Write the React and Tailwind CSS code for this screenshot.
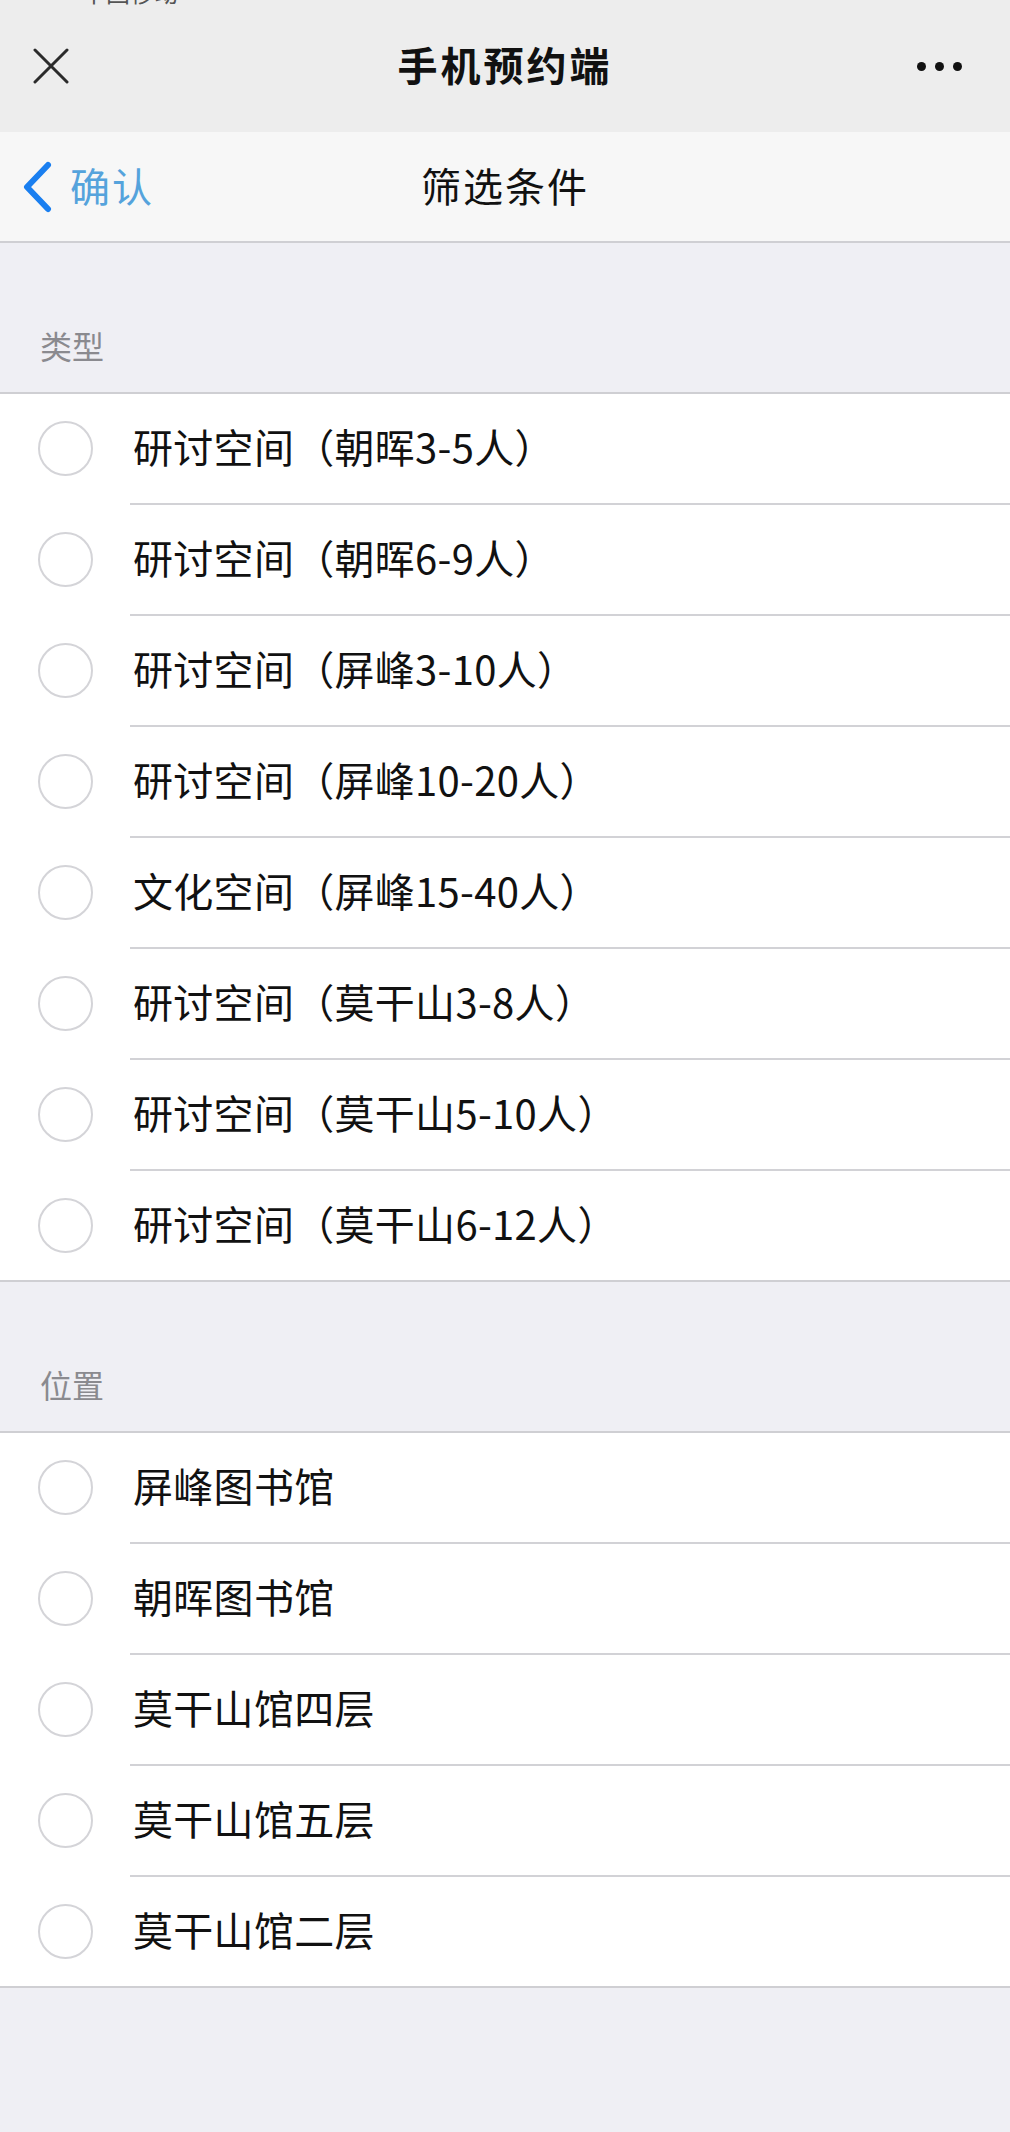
import React from "react";

const types = [
  "研讨空间（朝晖3-5人）",
  "研讨空间（朝晖6-9人）",
  "研讨空间（屏峰3-10人）",
  "研讨空间（屏峰10-20人）",
  "文化空间（屏峰15-40人）",
  "研讨空间（莫干山3-8人）",
  "研讨空间（莫干山5-10人）",
  "研讨空间（莫干山6-12人）",
];

const places = ["屏峰图书馆", "朝晖图书馆", "莫干山馆四层", "莫干山馆五层", "莫干山馆二层"];

const OptionRow = ({ label }) => (
  <div className="flex items-center h-[109px]">
    <div className="ml-[38px] w-[55px] h-[55px] rounded-full border-2 border-[#d4d4d8] shrink-0" />
    <span className="ml-[40px] mb-[6px] text-[40px] leading-none tracking-[0.3px] text-[#111]">{label}</span>
  </div>
);

const Section = ({ title, items }) => (
  <div>
    <div className="h-[149px] flex items-end pl-[40px] pb-[31px] text-[32px] leading-none text-[#8a8a8f]">
      {title}
    </div>
    <div className="bg-white border-y-2 border-[#cfcfd3]">
      {items.map((item, i) => (
        <div key={item}>
          {i > 0 && <div className="ml-[130px] h-[2px] bg-[#d2d2d6]" />}
          <OptionRow label={item} />
        </div>
      ))}
    </div>
  </div>
);

export default function App() {
  return (
    <div
      className="min-h-screen bg-[#efeff4]"
      style={{ fontFamily: '"Noto Sans CJK SC", "Noto Sans", sans-serif' }}
    >
      {/* top bar */}
      <div className="relative h-[132px] bg-[#ededed] grid grid-cols-[1fr_auto_1fr] items-center">
        <div className="absolute top-0 left-[82px] h-[5px] overflow-hidden">
          <span className="block -mt-[20px] text-[24px] leading-none text-[#555]">
            中国移动 <span className="inline-block w-[23px] h-[18px] bg-[#555] align-top" />
          </span>
        </div>
        <div className="pl-[33px]">
          <svg width="36" height="36" viewBox="0 0 36 36" fill="none">
            <path d="M2 2L34 34M34 2L2 34" stroke="#2b2b2b" strokeWidth="3" strokeLinecap="round" />
          </svg>
        </div>
        <div className="mb-[4px] text-[40px] font-semibold leading-none text-[#111] tracking-[3px]">手机预约端</div>
        <div className="flex justify-end pr-[48px] gap-[9px]">
          <span className="w-[9px] h-[9px] rounded-full bg-[#111]" />
          <span className="w-[9px] h-[9px] rounded-full bg-[#111]" />
          <span className="w-[9px] h-[9px] rounded-full bg-[#111]" />
        </div>
      </div>

      {/* filter nav */}
      <div className="h-[111px] bg-[#f7f7f7] border-b-2 border-[#cfcfd3] grid grid-cols-[1fr_auto_1fr] items-center box-border">
        <div className="flex items-center pl-[21px]">
          <svg width="32" height="52" viewBox="0 0 32 52" fill="none">
            <path d="M27 4L6 26L27 48" stroke="#1a7ff0" strokeWidth="6" strokeLinecap="round" strokeLinejoin="round" />
          </svg>
          <span className="ml-[17px] mb-[4px] text-[40px] leading-none tracking-[2px] text-[#55a3dc]">确认</span>
        </div>
        <div className="mb-[4px] text-[40px] leading-none text-[#111] tracking-[2px]">筛选条件</div>
        <div />
      </div>

      <Section title="类型" items={types} />
      <Section title="位置" items={places} />
    </div>
  );
}
